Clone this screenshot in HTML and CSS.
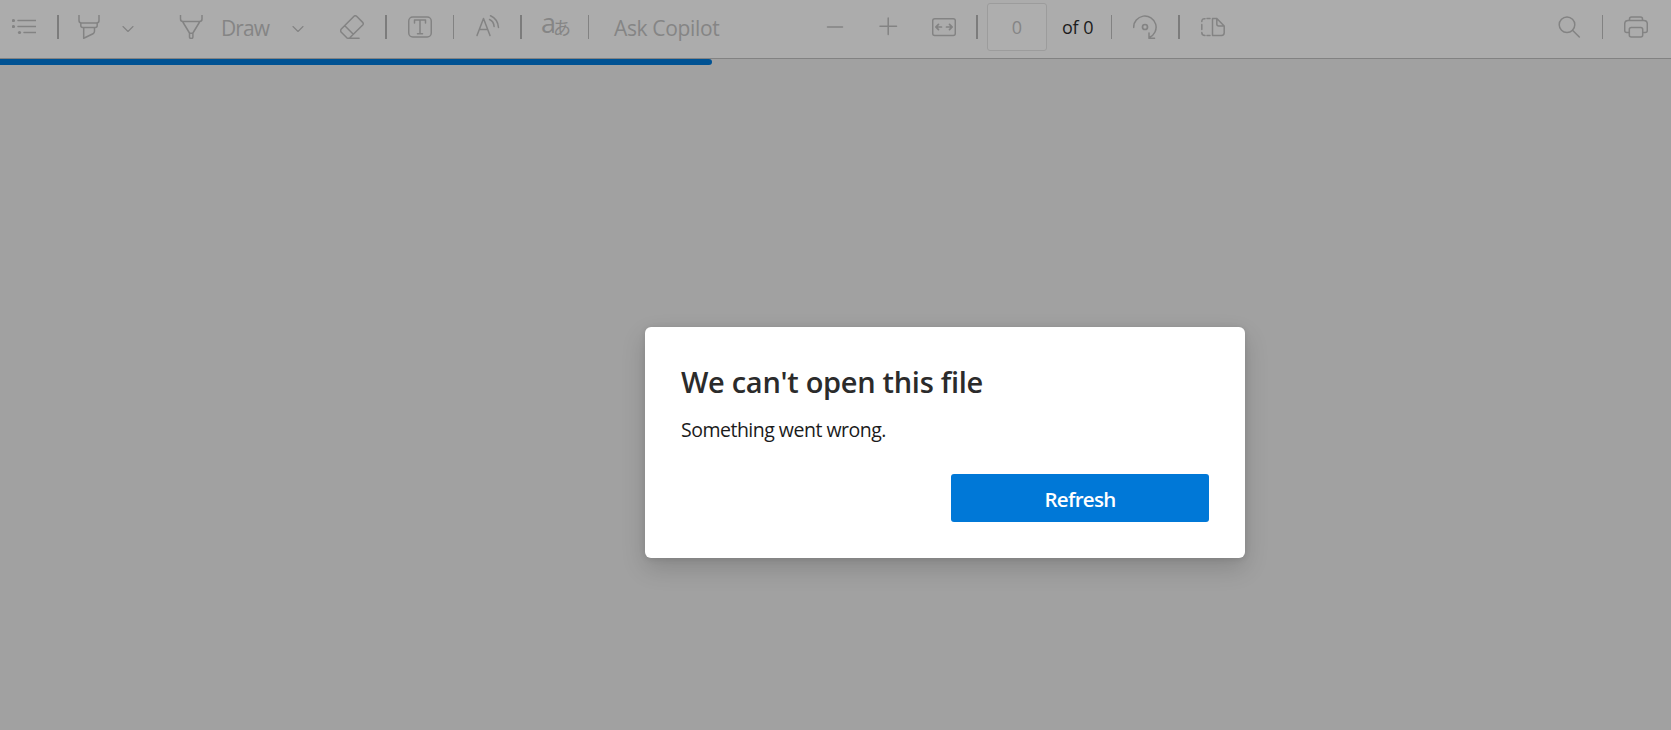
FILE: index.html
```html
<!DOCTYPE html>
<html lang="en">
<head>
<meta charset="utf-8">
<title>PDF viewer</title>
<link rel="stylesheet" href="styles.css">
</head>
<body>
<header class="toolbar">
  <svg class="icon contents" viewBox="0 0 24 24"><path d="M6 5.500h18M6 11.500h18M12 17.500h12"/><g class="solid"><circle cx="1.5" cy="5.500" r="1.6"/><circle cx="1.5" cy="11.500" r="1.6"/><circle cx="7.5" cy="17.500" r="1.6"/></g></svg>
  <i class="sep thick contents-sep"></i>
  <svg class="icon highlight" viewBox="0 0 24 24"><path d="M2 0v5.500q0 2.500 2.500 2.500h15q2.500 0 2.500-2.500V0M3.800 8v2.500q0 2 2 2h12.400q2 0 2-2V8M6.700 12.500v10.800l9.300-4.500q1.500-.8 1.500-2.500v-3.800"/></svg>
  <svg class="chevron after-highlight" viewBox="0 0 14 8"><path d="M2 1.500l5 5 5-5"/></svg>
  <svg class="icon pen" viewBox="0 0 24 24"><path d="M1.500 0v4q0 2.500 2.500 2.500h16.500q2.500 0 2.500-2.500V0M3.500 6.500l7 11.500v4q0 1.500 1.700 1.500t1.700-1.500v-4l7-11.500M10.500 18.300h3.400"/></svg>
  <span class="label draw">Draw</span>
  <svg class="chevron after-draw" viewBox="0 0 14 8"><path d="M2 1.500l5 5 5-5"/></svg>
  <svg class="icon eraser" viewBox="0 0 24 24"><path d="M1.300 14L14 1.300q1.300-1.200 2.600 0l6.100 6.100q1.200 1.300 0 2.600L9.800 22.800q-1.600 1-3 0L1.300 17.300q-1.300-1.600 0-3.300zM4.800 10.700l8.500 8.500M8.500 23.300H19"/></svg>
  <i class="sep thick"></i>
  <svg class="icon textbox" viewBox="0 0 24 24"><rect x=".75" y="2" width="22.500" height="20" rx="4"/><path d="M6.500 8V5h11v3M12 5v13.500M9.500 18.700h5"/></svg>
  <i class="sep"></i>
  <svg class="icon read" viewBox="0 0 24 24"><path d="M1 20.500L7.500 3.500 14 20.500M3.300 14.500h8.400M14.500.800c4.500 2 7.500 6 8 11.700M13.500 4.500c2.500 1 4.300 3.500 4.600 7"/></svg>
  <i class="sep thick read-sep"></i>
  <span class="translate"><span class="latin">a</span><span class="kana" lang="ja">あ</span></span>
  <i class="sep translate-sep"></i>
  <span class="label copilot">Ask Copilot</span>
  <svg class="icon minus" viewBox="0 0 24 24"><path d="M4.500 12h15"/></svg>
  <svg class="icon plus" viewBox="0 0 24 24"><path d="M4 11.200h16.500M12.200 3v16.500"/></svg>
  <svg class="icon fit" viewBox="0 0 24 24"><rect x=".7" y="3.700" width="22.600" height="16.800" rx="2"/><path class="bold" d="M9.500 12H4M6.500 9.300L3.800 12l2.700 2.700M14.500 12H20M17.500 9.300l2.700 2.700-2.700 2.700"/></svg>
  <i class="sep thick fit-sep"></i>
  <span class="page">0</span>
  <span class="total">of 0</span>
  <i class="sep total-sep"></i>
  <svg class="icon rotate" viewBox="0 0 24 24"><path d="M.700 12.500A11.200 11.200 0 1 1 16.300 22.500M16 18v5.300h5.500"/><circle cx="12" cy="12" r="2.500" class="bold"/></svg>
  <i class="sep thick"></i>
  <svg class="icon pages" viewBox="0 0 24 24"><path d="M11.500 3.500v17h9q2.700 0 2.700-2.700V11L15.800 3.500h-4.300zM15.800 3.500V9q0 2 2 2h5.400M9 3.500H6M4 3.700Q.8 3.500.8 6.500M.8 9.500v5M.8 17.500q0 3 3.200 3M6 20.500h3"/></svg>
  <svg class="icon search" viewBox="0 0 24 24"><circle cx="9" cy="9.700" r="7.800"/><path d="M14.500 15.200l6.800 6.800"/></svg>
  <i class="sep search-sep"></i>
  <svg class="icon print" viewBox="0 0 24 24"><path d="M5.500 5.500V4q0-2 2-2h9q2 0 2 2v1.500M5.300 17.500H2.700q-2 0-2-2V9q0-3.500 3.500-3.500h15.600q3.500 0 3.500 3.500v6.500q0 2-2 2h-2.600"/><rect x="5.300" y="12.500" width="13.400" height="9.500" rx="2"/></svg>
</header>
<main class="viewer">
  <div class="progress"></div>
  <section class="dialog" role="alertdialog">
    <h1 class="title">We can't open this file</h1>
    <p class="message">Something went wrong.</p>
    <button class="refresh">Refresh</button>
  </section>
</main>
</body>
</html>
```
FILE: styles.css
```css
* { box-sizing: border-box; }
body {
  margin: 0;
  height: 730px;
  overflow: hidden;
  display: flex;
  flex-direction: column;
  background: #a1a1a1;
  font-family: "Open Sans", "Noto Sans", sans-serif;
}
.toolbar {
  height: 59px;
  padding: 0 23px 4px 12px;
  display: flex;
  align-items: center;
  background: #acacac;
  border-bottom: 1px solid #828282;
  color: #858585;
}
.toolbar > * { flex: none; }
.icon, .chevron {
  fill: none;
  stroke: #838383;
  stroke-width: 1.5;
  stroke-linecap: round;
  stroke-linejoin: round;
}
.icon { width: 24px; height: 24px; margin-left: 21px; }
.icon .solid { fill: #838383; stroke: none; }
.icon .bold { stroke-width: 1.7; }
.chevron { width: 14px; height: 8px; margin-top: 3px; stroke-width: 1.1; }
.sep { width: 1px; height: 24px; margin-left: 21px; background: #828282; }
.sep.thick { width: 2px; background: #7c7c7c; }
.contents { margin-left: 0; }
.highlight { margin-left: 18px; }
.after-highlight { margin-left: 20px; }
.pen { margin-left: 44px; }
.label { padding-top: 2px; font-size: 21px; line-height: 28px; white-space: nowrap; }
.draw { width: 47px; margin-left: 18px; letter-spacing: -0.9px; }
.after-draw { margin-left: 23px; }
.eraser { margin-left: 35px; }
.read { margin-left: 22px; }
.read-sep { margin-left: 20px; }
.translate { width: 28px; height: 30px; margin-left: 19px; display: flex; line-height: 30px; }
.latin { width: 12px; margin-top: -4px; font-family: "Open Sans", sans-serif; font-weight: 400; font-size: 27px; }
.kana { font-family: "Noto Sans CJK JP", sans-serif; font-size: 18px; letter-spacing: -2px; }
.translate-sep { margin-left: 19px; }
.copilot { width: 106px; margin-left: 24px; padding-left: 1px; letter-spacing: -0.35px; }
.minus { margin-left: 104px; }
.plus { margin-left: 29px; }
.fit { margin-left: 32px; }
.fit-sep { margin-left: 20px; }
.page {
  width: 60px;
  height: 48px;
  margin-left: 9px;
  border: 1px solid #9c9c9c;
  border-radius: 3px;
  background: #aeaeae;
  font-size: 18px;
  line-height: 46px;
  text-align: center;
}
.total { width: 31px; margin-left: 15px; color: #1c1c1c; font-size: 18px; line-height: 24px; white-space: nowrap; letter-spacing: -0.4px; word-spacing: 1px; }
.total-sep { margin-left: 18px; }
.search { margin-left: auto; }
.search-sep { margin-left: 20px; }
.viewer { flex: 1; }
.progress { width: 712px; height: 6px; border-radius: 0 3px 3px 0; background: #005293; }
.dialog {
  width: 600px;
  height: 231px;
  margin: 262px 0 0 645px;
  padding: 35px 36px 36px;
  display: flex;
  flex-direction: column;
  border-radius: 6px;
  background: #fff;
  box-shadow: 0 10px 24px rgba(0, 0, 0, 0.16), 0 1px 6px rgba(0, 0, 0, 0.1);
}
.title { margin: 0; font-size: 29px; font-weight: 600; line-height: 40px; letter-spacing: -0.3px; color: #2b2b2b; white-space: nowrap; }
.message { margin: 14px 0 0; font-size: 19.5px; line-height: 28px; letter-spacing: -0.5px; color: #1b1b1b; white-space: nowrap; }
.refresh {
  width: 258px;
  height: 48px;
  margin: 30px 0 0 auto;
  padding: 1px 0 0;
  border: 0;
  border-radius: 3px;
  background: #0078d7;
  color: #fff;
  font: 600 20.5px "Open Sans", sans-serif;
  letter-spacing: -0.7px;
}
```
